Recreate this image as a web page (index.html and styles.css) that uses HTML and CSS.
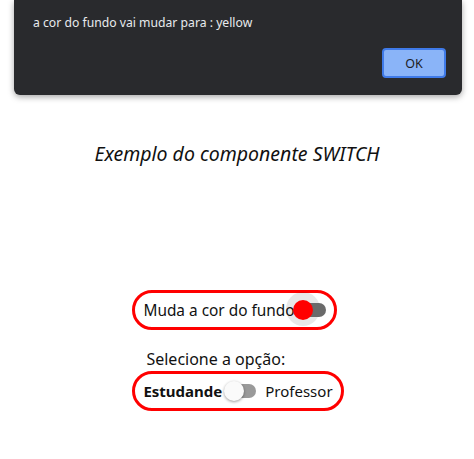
FILE: index.html
```html
<!DOCTYPE html>
<html>
<head>
<meta charset="utf-8">
<link rel="stylesheet" href="styles.css">
</head>
<body>
<div class="page">
  <h1 class="title">Exemplo do componente SWITCH</h1>
  <div class="group">
    <div class="pill pill-one">
      <span class="label">Muda a cor do fundo</span>
      <span class="switch on">
        <span class="halo"></span>
        <span class="track"></span>
        <span class="thumb"></span>
      </span>
    </div>
    <div class="caption">Selecione a opção:</div>
    <div class="pill pill-two">
      <span class="label bold">Estudande</span>
      <span class="switch off">
        <span class="track"></span>
        <span class="thumb"></span>
      </span>
      <span class="label">Professor</span>
    </div>
  </div>
</div>
<div class="dialog">
  <div class="dialog-msg">a cor do fundo vai mudar para : yellow</div>
  <div class="dialog-actions">
    <button class="ok">OK</button>
  </div>
</div>
</body>
</html>
```
FILE: styles.css
```css
html, body {
  margin: 0;
  padding: 0;
  background: #ffffff;
  width: 474px;
  height: 459px;
  overflow: hidden;
  font-family: "Noto Sans", "Open Sans", sans-serif;
}
.page {
  display: flex;
  flex-direction: column;
  align-items: center;
  padding-top: 141px;
}
.title {
  margin: 0;
  font-size: 19.5px;
  font-weight: 400;
  font-style: italic;
  color: #111;
  line-height: 26px;
}
.group {
  margin-top: 123px;
  margin-left: 2px;
  display: flex;
  flex-direction: column;
  align-items: flex-start;
}
.pill {
  display: flex;
  align-items: center;
  border: 3px solid #ff0000;
  border-radius: 22px;
  height: 34px;
  box-sizing: content-box;
  font-size: 15px;
  color: #111;
}
.pill-one { padding-left: 8px; padding-right: 7px; font-size: 15.4px; }
.pill-two { padding-left: 8px; padding-right: 8px; }
.caption {
  font-size: 16px;
  color: #111;
  margin-top: 19px;
  margin-bottom: 1px;
  line-height: 21px;
  margin-left: 14px;
}
.bold { font-weight: 700; }
.switch {
  position: relative;
  width: 34px;
  height: 20px;
  display: inline-block;
}
.switch .track {
  position: absolute;
  left: 0;
  top: 3px;
  width: 34px;
  height: 14px;
  border-radius: 7px;
}
.switch .thumb {
  position: absolute;
  top: 0;
  width: 20px;
  height: 20px;
  border-radius: 50%;
}
.switch.on { margin-left: -2px; }
.switch.on .track { background: #6a6a6a; left: 2px; width: 31px; }
.switch.on .thumb { left: 0; background: #ff0000; }
.switch.on .halo {
  position: absolute;
  left: -7px;
  top: -8px;
  width: 34px;
  height: 34px;
  border-radius: 50%;
  background: rgba(0,0,0,0.09);
}
.switch.off { margin: 0 9px 0 2px; width: 32px; }
.switch.off .track { background: #9a9a9a; left: 4px; width: 28px; }
.switch.off .thumb {
  left: 0;
  background: #fafafa;
  box-shadow: 0 1px 3px rgba(0,0,0,0.4);
}
.dialog {
  position: absolute;
  left: 14px;
  top: 0;
  width: 448px;
  height: 95px;
  background: #292a2d;
  border-radius: 0 0 6px 6px;
  box-shadow: 0 2px 6px rgba(0,0,0,0.35);
  box-sizing: border-box;
  padding: 13px 16px 0 19px;
  font-family: "Noto Sans", sans-serif;
}
.dialog-msg {
  color: #e8eaed;
  font-size: 12.2px;
  line-height: 20px;
}
.dialog-actions {
  display: flex;
  justify-content: flex-end;
  margin-top: 15px;
}
.ok {
  width: 64px;
  height: 30px;
  background: #8ab4f8;
  border: 2px solid #3f7ae8;
  border-radius: 4px;
  color: #202124;
  font-family: "Noto Sans", sans-serif;
  font-size: 12.5px;
  padding: 0;
}
```
